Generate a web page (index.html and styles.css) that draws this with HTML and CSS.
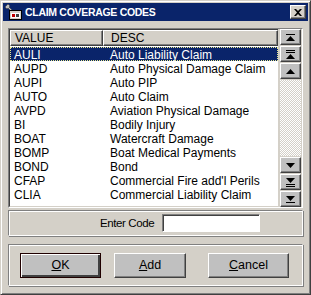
FILE: index.html
```html
<!DOCTYPE html>
<html lang="en">
<head>
    <meta charset="UTF-8">
    <title>Claim Coverage Codes</title>
    <link rel="stylesheet" href="styles.css">
</head>
<body>

    <div class="window">
        <!-- title bar -->
        <div class="titlebar">
            <svg class="app-icon" width="18" height="16" viewBox="0 0 18 16">
                <path d="M1 3 L4 0 L6 2 L5 3 L9 7 L8 8 L4 4 L3 5 Z" fill="#c0c0c0" stroke="#404040" stroke-width="0.6"/>
                <rect x="5.5" y="6.5" width="12" height="9" fill="#d4d0c8" stroke="#000"/>
                <rect x="7" y="9" width="9" height="5" fill="#fff"/>
                <rect x="8" y="10" width="3" height="3" fill="#c00000"/>
                <rect x="12" y="10" width="3" height="3" fill="#404040"/>
            </svg>
            <span class="title-text">CLAIM COVERAGE CODES</span>
            <div class="close-btn">
                <svg width="8" height="7" viewBox="0 0 8 7">
                    <path d="M0 0 L2 0 L4 2 L6 0 L8 0 L5 3.5 L8 7 L6 7 L4 5 L2 7 L0 7 L3 3.5 Z" fill="#000"/>
                </svg>
            </div>
        </div>

        <div class="content">
            <!-- code list -->
            <div class="listbox">
                <div class="list">
                    <div class="list-header">
                        <div class="col-head col-value">VALUE</div>
                        <div class="col-head col-desc">DESC</div>
                    </div>
                    <div class="rows" id="rows"></div>
                </div>
                <div class="scrollbar">
                    <div class="sb-btn">
                        <svg width="9" height="7" viewBox="0 0 9 7"><rect x="0" y="0" width="9" height="1"/><path d="M4.5 2 L9 7 L0 7 Z"/></svg>
                    </div>
                    <div class="sb-btn">
                        <svg width="9" height="9" viewBox="0 0 9 9"><rect x="0" y="0" width="9" height="1"/><rect x="0" y="2" width="9" height="1"/><path d="M4.5 4 L9 9 L0 9 Z"/></svg>
                    </div>
                    <div class="sb-btn">
                        <svg width="9" height="5" viewBox="0 0 9 5"><path d="M4.5 0 L9 5 L0 5 Z"/></svg>
                    </div>
                    <div class="sb-track"></div>
                    <div class="sb-btn">
                        <svg width="9" height="5" viewBox="0 0 9 5"><path d="M0 0 L9 0 L4.5 5 Z"/></svg>
                    </div>
                    <div class="sb-btn">
                        <svg width="9" height="9" viewBox="0 0 9 9"><path d="M0 0 L9 0 L4.5 5 Z"/><rect x="0" y="6" width="9" height="1"/><rect x="0" y="8" width="9" height="1"/></svg>
                    </div>
                    <div class="sb-btn">
                        <svg width="9" height="7" viewBox="0 0 9 7"><path d="M0 0 L9 0 L4.5 5 Z"/><rect x="0" y="6" width="9" height="1"/></svg>
                    </div>
                </div>
            </div>

            <!-- code entry -->
            <div class="panel entry-panel">
                <label class="entry-label" for="codeInput">Enter Code</label>
                <input type="text" id="codeInput" class="entry-input">
            </div>

            <!-- actions -->
            <div class="panel button-panel">
                <button class="btn btn-ok default"><u>O</u>K</button>
                <button class="btn btn-add"><u>A</u>dd</button>
                <button class="btn btn-cancel"><u>C</u>ancel</button>
            </div>
        </div>
    </div>

    <script>
        const codes = [
            ["AULI", "Auto Liability Claim"],
            ["AUPD", "Auto Physical Damage Claim"],
            ["AUPI", "Auto PIP"],
            ["AUTO", "Auto Claim"],
            ["AVPD", "Aviation Physical Damage"],
            ["BI", "Bodily Injury"],
            ["BOAT", "Watercraft Damage"],
            ["BOMP", "Boat Medical Payments"],
            ["BOND", "Bond"],
            ["CFAP", "Commercial Fire add'l Perils"],
            ["CLIA", "Commercial Liability Claim"]
        ];

        const rowsDiv = document.getElementById("rows");
        codes.forEach((code, i) => {
            const row = document.createElement("div");
            row.className = i === 0 ? "row selected" : "row";
            row.innerHTML = `<span class="cell col-value">${code[0]}</span><span class="cell col-desc">${code[1]}</span>`;
            rowsDiv.appendChild(row);
        });
    </script>

</body>
</html>
```

FILE: styles.css
```css
body { margin: 0; font-family: "Liberation Sans", Arial, sans-serif; font-size: 12px; color: #000; }

.window { width: 311px; height: 295px; box-sizing: border-box; background: #d4d0c8; border: 1px solid; border-color: #d4d0c8 #404040 #404040 #d4d0c8; box-shadow: inset 1px 1px #fff, inset -1px -1px #808080; padding: 2px; display: flex; flex-direction: column; }

.titlebar { height: 18px; background: #0a246a; display: flex; align-items: center; padding: 0 2px 0 1px; }
.app-icon { margin-right: 3px; }
.title-text { color: #fff; font-weight: bold; font-size: 10.5px; flex: 1; letter-spacing: -0.3px; }
.close-btn { width: 16px; height: 14px; box-sizing: border-box; background: #d4d0c8; border: 1px solid; border-color: #fff #404040 #404040 #fff; box-shadow: inset -1px -1px #808080; display: flex; align-items: center; justify-content: center; }

.content { flex: 1; padding: 7px 5px 0 5px; display: flex; flex-direction: column; }

/* list with its own scroll buttons */
.listbox { height: 178px; display: flex; border: 1px solid; border-color: #808080 #fff #fff #808080; background: #fff; }
.list { flex: 1; display: flex; flex-direction: column; border: 1px solid; border-color: #404040 #d4d0c8 #d4d0c8 #404040; border-right: none; overflow: hidden; }
.list-header { display: flex; height: 16px; }
.col-head { box-sizing: border-box; height: 16px; background: #d4d0c8; border: 1px solid; border-color: #fff #404040 #404040 #fff; box-shadow: inset -1px -1px #808080; padding: 1px 0 0 4px; line-height: 13px; }
.col-head.col-value { width: 93px; }
.col-head.col-desc { flex: 1; padding-left: 7px; }
.rows { padding-top: 1px; }
.row { display: flex; height: 14px; line-height: 14px; box-sizing: border-box; border: 1px solid transparent; }
.row.selected { background: #0a246a; color: #fff; border: 1px dotted #e8e890; }
.cell.col-value { width: 94px; padding-left: 3px; box-sizing: border-box; }
.cell.col-desc { flex: 1; padding-left: 5px; }

.scrollbar { width: 21px; display: flex; flex-direction: column; gap: 1px; background: #d4d0c8; padding: 0 1px 0 1px; border-left: 1px solid #d4d0c8; }
.sb-btn { height: 16px; box-sizing: border-box; background: #c0c0c0; border: 1px solid; border-color: #fff #404040 #404040 #fff; box-shadow: inset -1px -1px #808080; display: flex; align-items: center; justify-content: center; }
.sb-btn svg { fill: #000; }
.sb-track { flex: 1; background-color: #fff; background-image: repeating-conic-gradient(#d4d0c8 0 25%, #fff 0 50%); background-size: 2px 2px; }

/* etched group panels */
.panel { border: 1px solid; border-color: #808080 #fff #fff #808080; box-shadow: inset 1px 1px #fff, 1px 1px #808080; }
.entry-panel { margin-top: 2px; height: 24px; display: flex; align-items: center; padding-left: 91px; gap: 8px; }
.entry-label { font-size: 11.5px; letter-spacing: -0.4px; }
.entry-input { width: 98px; height: 18px; box-sizing: border-box; margin: 0; padding: 0 2px; border: 1px solid; border-color: #808080 #fff #fff #808080; box-shadow: inset 1px 1px #404040; font: inherit; background: #fff; }

.button-panel { margin-top: 8px; height: 40px; display: flex; align-items: center; padding-left: 11px; }
.btn { height: 25px; box-sizing: border-box; padding: 0; background: #c0c0c0; border: 1px solid; border-color: #fff #404040 #404040 #fff; box-shadow: inset -1px -1px #808080; font: inherit; font-size: 12.5px; color: #000; }
.btn.default { border: 1px solid #200000; box-shadow: inset 1px 1px #fff, inset -2px -2px #404040; }
.btn-ok { width: 81px; }
.btn-add { width: 72px; margin-left: 13px; }
.btn-cancel { width: 81px; margin-left: 22px; }
```
